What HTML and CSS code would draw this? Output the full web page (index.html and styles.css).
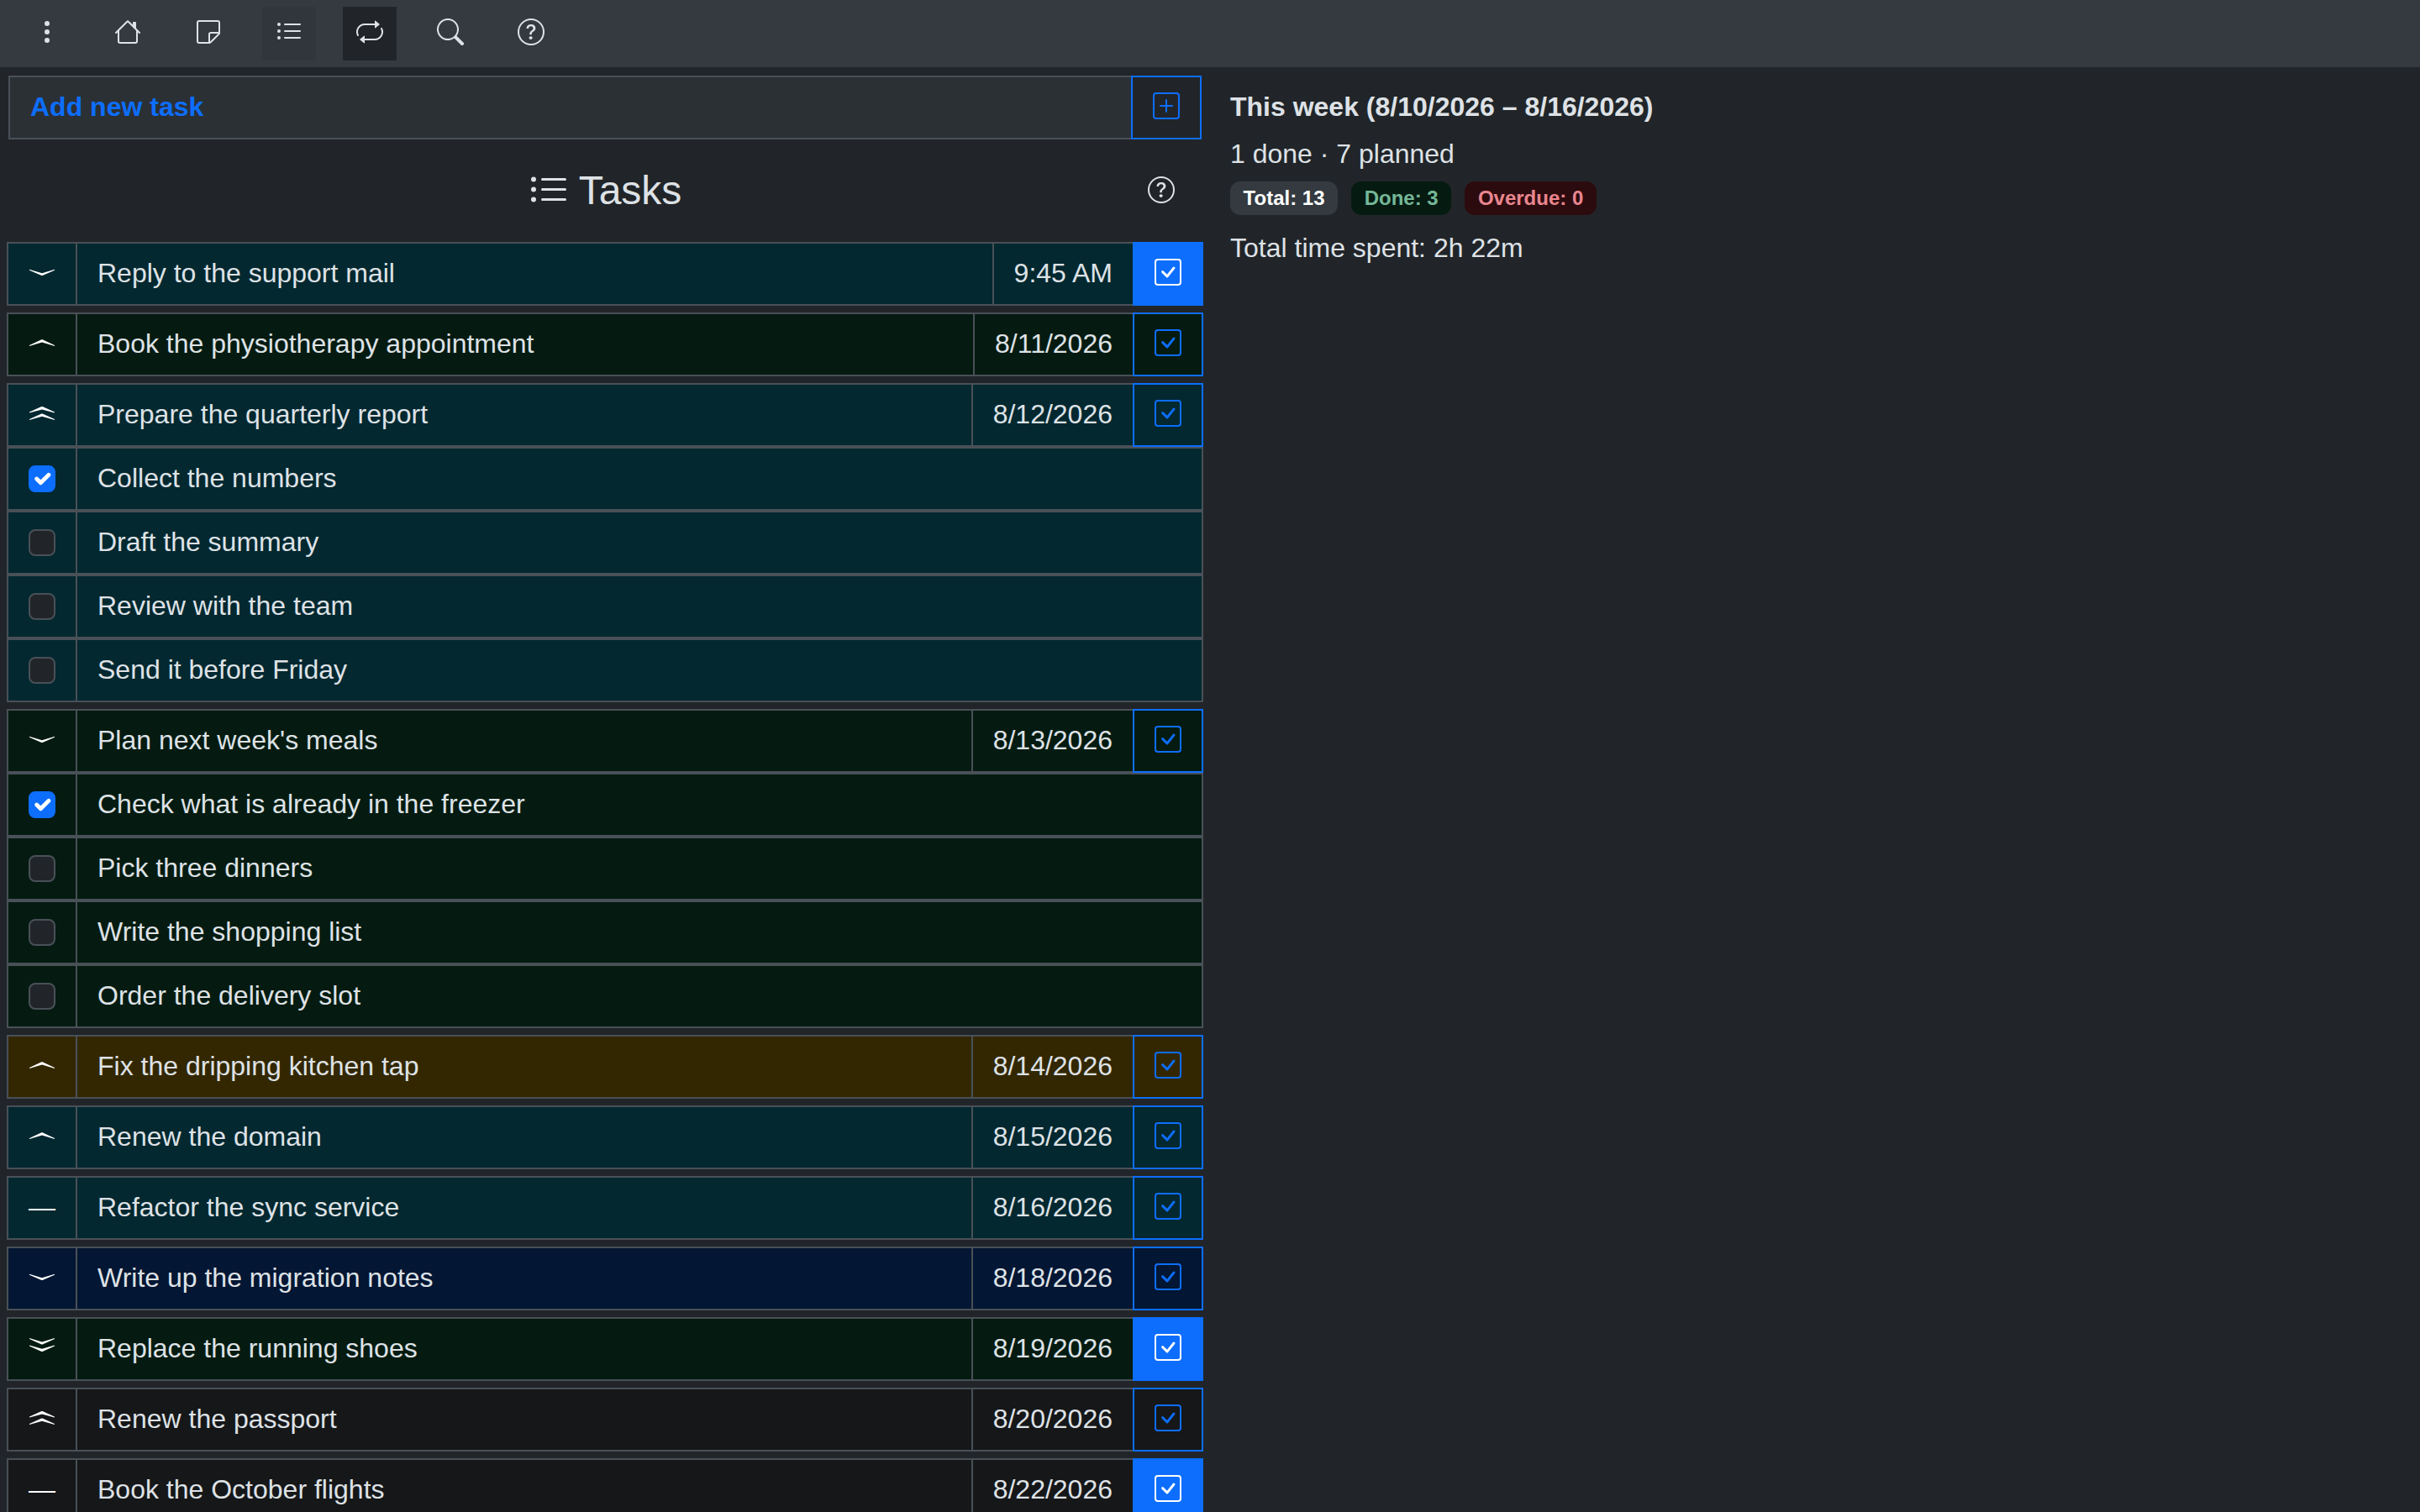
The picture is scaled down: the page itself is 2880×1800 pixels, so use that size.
FILE: index.html
```html
<!DOCTYPE html>
<html lang="en">
<head>
    <meta charset="UTF-8">
    <meta name="viewport" content="width=device-width, initial-scale=1.0">
    <title>Tasks</title>
    <link rel="stylesheet" href="styles.css">
</head>
<body>
    <svg class="sprite" xmlns="http://www.w3.org/2000/svg">
        <symbol id="i-dots" viewBox="0 0 16 16"><path d="M9.5 13a1.5 1.5 0 1 1-3 0 1.5 1.5 0 0 1 3 0zm0-5a1.5 1.5 0 1 1-3 0 1.5 1.5 0 0 1 3 0zm0-5a1.5 1.5 0 1 1-3 0 1.5 1.5 0 0 1 3 0z"/></symbol>
        <symbol id="i-house" viewBox="0 0 16 16"><path d="M8.707 1.5a1 1 0 0 0-1.414 0L.646 8.146a.5.5 0 0 0 .708.708L2 8.207V13.5A1.5 1.5 0 0 0 3.5 15h9a1.5 1.5 0 0 0 1.5-1.5V8.207l.646.647a.5.5 0 0 0 .708-.708L13 5.793V2.5a.5.5 0 0 0-.5-.5h-1a.5.5 0 0 0-.5.5v1.293L8.707 1.5ZM13 7.207V13.5a.5.5 0 0 1-.5.5h-9a.5.5 0 0 1-.5-.5V7.207l5-5 5 5Z"/></symbol>
        <symbol id="i-sticky" viewBox="0 0 16 16"><path d="M2.5 1A1.5 1.5 0 0 0 1 2.5v11A1.5 1.5 0 0 0 2.5 15h6.086a1.5 1.5 0 0 0 1.06-.44l4.915-4.914A1.5 1.5 0 0 0 15 8.586V2.5A1.5 1.5 0 0 0 13.5 1h-11zM2 2.5a.5.5 0 0 1 .5-.5h11a.5.5 0 0 1 .5.5V8H9.5A1.5 1.5 0 0 0 8 9.5V14H2.5a.5.5 0 0 1-.5-.5v-11zm7 11.293V9.5a.5.5 0 0 1 .5-.5h4.293L9 13.793z"/></symbol>
        <symbol id="i-list" viewBox="0 0 16 16"><path d="M5 11.5a.5.5 0 0 1 .5-.5h9a.5.5 0 0 1 0 1h-9a.5.5 0 0 1-.5-.5zm0-4a.5.5 0 0 1 .5-.5h9a.5.5 0 0 1 0 1h-9a.5.5 0 0 1-.5-.5zm0-4a.5.5 0 0 1 .5-.5h9a.5.5 0 0 1 0 1h-9a.5.5 0 0 1-.5-.5zm-3 1a1 1 0 1 0 0-2 1 1 0 0 0 0 2zm0 4a1 1 0 1 0 0-2 1 1 0 0 0 0 2zm0 4a1 1 0 1 0 0-2 1 1 0 0 0 0 2z"/></symbol>
        <symbol id="i-repeat" viewBox="0 0 16 16"><path d="M11 5.466V4H5a4 4 0 0 0-3.584 5.777.5.5 0 1 1-.896.446A5 5 0 0 1 5 3h6V1.534a.25.25 0 0 1 .41-.192l2.36 1.966c.12.1.12.284 0 .384l-2.36 1.966a.25.25 0 0 1-.41-.192Zm3.81.086a.5.5 0 0 1 .67.225A5 5 0 0 1 11 13H5v1.466a.25.25 0 0 1-.41.192l-2.36-1.966a.25.25 0 0 1 0-.384l2.36-1.966a.25.25 0 0 1 .41.192V12h6a4 4 0 0 0 3.585-5.777.5.5 0 0 1 .225-.67Z"/></symbol>
        <symbol id="i-search" viewBox="0 0 16 16"><path d="M11.742 10.344a6.5 6.5 0 1 0-1.397 1.398h-.001c.03.04.062.078.098.115l3.85 3.85a1 1 0 0 0 1.415-1.414l-3.85-3.85a1.007 1.007 0 0 0-.115-.1zM12 6.5a5.5 5.5 0 1 1-11 0 5.5 5.5 0 0 1 11 0z"/></symbol>
        <symbol id="i-help" viewBox="0 0 16 16"><path d="M8 15A7 7 0 1 1 8 1a7 7 0 0 1 0 14zm0 1A8 8 0 1 0 8 0a8 8 0 0 0 0 16z"/><path d="M5.255 5.786a.237.237 0 0 0 .241.247h.825c.138 0 .248-.113.266-.25.09-.656.54-1.134 1.342-1.134.686 0 1.314.343 1.314 1.168 0 .635-.374.927-.965 1.371-.673.489-1.206 1.06-1.168 1.987l.003.217a.25.25 0 0 0 .25.246h.811a.25.25 0 0 0 .25-.25v-.105c0-.718.273-.927 1.01-1.486.609-.463 1.244-.977 1.244-2.056 0-1.511-1.276-2.241-2.673-2.241-1.267 0-2.655.59-2.75 2.286zm1.557 5.763c0 .533.425.927 1.01.927.609 0 1.028-.394 1.028-.927 0-.552-.42-.94-1.029-.94-.584 0-1.009.388-1.009.94z"/></symbol>
        <symbol id="i-check" viewBox="0 0 16 16"><path d="M14 1a1 1 0 0 1 1 1v12a1 1 0 0 1-1 1H2a1 1 0 0 1-1-1V2a1 1 0 0 1 1-1h12zM2 0a2 2 0 0 0-2 2v12a2 2 0 0 0 2 2h12a2 2 0 0 0 2-2V2a2 2 0 0 0-2-2H2z"/><path d="M10.97 4.97a.75.75 0 0 1 1.071 1.05l-3.992 4.99a.75.75 0 0 1-1.08.02L4.324 8.384a.75.75 0 1 1 1.06-1.06l2.094 2.093 3.473-4.425a.235.235 0 0 1 .02-.022z"/></symbol>
        <symbol id="i-plus" viewBox="0 0 16 16"><path d="M14 1a1 1 0 0 1 1 1v12a1 1 0 0 1-1 1H2a1 1 0 0 1-1-1V2a1 1 0 0 1 1-1h12zM2 0a2 2 0 0 0-2 2v12a2 2 0 0 0 2 2h12a2 2 0 0 0 2-2V2a2 2 0 0 0-2-2H2z"/><path d="M8 4a.5.5 0 0 1 .5.5v3h3a.5.5 0 0 1 0 1h-3v3a.5.5 0 0 1-1 0v-3h-3a.5.5 0 0 1 0-1h3v-3A.5.5 0 0 1 8 4z"/></symbol>
        <symbol id="i-tick" viewBox="0 0 20 20"><path fill="none" stroke="#fff" stroke-linecap="round" stroke-linejoin="round" stroke-width="3" d="m6 10 3 3 6-6"/></symbol>
        <symbol id="i-down" viewBox="0 0 32 32"><path d="M1 12.8 16 17.2 31 12.8V13.8L16.6 20H15.4L1 13.8Z"/></symbol>
        <symbol id="i-up" viewBox="0 0 32 32"><path d="M1 20 16 15.6 31 20V19L16.6 12.2H15.4L1 19Z"/></symbol>
        <symbol id="i-down2" viewBox="0 0 32 32"><path d="M1 5 16 9.4 31 5V6L16.6 12.6H15.4L1 6Z"/><path d="M1 13.4 16 17.8 31 13.4V14.4L16.6 21H15.4L1 14.4Z"/></symbol>
        <symbol id="i-up2" viewBox="0 0 32 32"><path d="M1 15.6 16 11.4 31 15.6V14.6L16.6 8H15.4L1 14.6Z"/><path d="M1 24 16 19.8 31 24V23L16.6 16.4H15.4L1 23Z"/></symbol>
    </svg>

    <nav class="topbar">
        <button class="nav-btn"><svg class="icon"><use href="#i-dots"/></svg></button>
        <button class="nav-btn"><svg class="icon"><use href="#i-house"/></svg></button>
        <button class="nav-btn"><svg class="icon"><use href="#i-sticky"/></svg></button>
        <button class="nav-btn hover"><svg class="icon"><use href="#i-list"/></svg></button>
        <button class="nav-btn active"><svg class="icon"><use href="#i-repeat"/></svg></button>
        <button class="nav-btn"><svg class="icon"><use href="#i-search"/></svg></button>
        <button class="nav-btn"><svg class="icon"><use href="#i-help"/></svg></button>
    </nav>

    <main class="content">
        <section class="tasks">
            <div class="add-bar">
                <div class="add-input">Add new task</div>
                <button class="add-btn"><svg class="icon"><use href="#i-plus"/></svg></button>
            </div>

            <div class="title-row">
                <h4 class="title"><svg class="title-icon"><use href="#i-list"/></svg> Tasks</h4>
                <svg class="icon help"><use href="#i-help"/></svg>
            </div>

            <div class="task-list">
                <div class="task-group row-info">
                    <div class="task-row">
                        <div class="cell prio"><svg class="icon"><use href="#i-down"/></svg></div>
                        <div class="cell name">Reply to the support mail</div>
                        <div class="cell date">9:45 AM</div>
                        <button class="done solid"><svg class="icon"><use href="#i-check"/></svg></button>
                    </div>
                </div>
                <div class="task-group row-success">
                    <div class="task-row">
                        <div class="cell prio"><svg class="icon"><use href="#i-up"/></svg></div>
                        <div class="cell name">Book the physiotherapy appointment</div>
                        <div class="cell date">8/11/2026</div>
                        <button class="done"><svg class="icon"><use href="#i-check"/></svg></button>
                    </div>
                </div>
                <div class="task-group row-info">
                    <div class="task-row">
                        <div class="cell prio"><svg class="icon"><use href="#i-up2"/></svg></div>
                        <div class="cell name">Prepare the quarterly report</div>
                        <div class="cell date">8/12/2026</div>
                        <button class="done"><svg class="icon"><use href="#i-check"/></svg></button>
                    </div>
                    <div class="task-row sub">
                        <div class="cell prio"><span class="box on"><svg><use href="#i-tick"/></svg></span></div>
                        <div class="cell name">Collect the numbers</div>
                    </div>
                    <div class="task-row sub">
                        <div class="cell prio"><span class="box"></span></div>
                        <div class="cell name">Draft the summary</div>
                    </div>
                    <div class="task-row sub">
                        <div class="cell prio"><span class="box"></span></div>
                        <div class="cell name">Review with the team</div>
                    </div>
                    <div class="task-row sub">
                        <div class="cell prio"><span class="box"></span></div>
                        <div class="cell name">Send it before Friday</div>
                    </div>
                </div>
                <div class="task-group row-success">
                    <div class="task-row">
                        <div class="cell prio"><svg class="icon"><use href="#i-down"/></svg></div>
                        <div class="cell name">Plan next week's meals</div>
                        <div class="cell date">8/13/2026</div>
                        <button class="done"><svg class="icon"><use href="#i-check"/></svg></button>
                    </div>
                    <div class="task-row sub">
                        <div class="cell prio"><span class="box on"><svg><use href="#i-tick"/></svg></span></div>
                        <div class="cell name">Check what is already in the freezer</div>
                    </div>
                    <div class="task-row sub">
                        <div class="cell prio"><span class="box"></span></div>
                        <div class="cell name">Pick three dinners</div>
                    </div>
                    <div class="task-row sub">
                        <div class="cell prio"><span class="box"></span></div>
                        <div class="cell name">Write the shopping list</div>
                    </div>
                    <div class="task-row sub">
                        <div class="cell prio"><span class="box"></span></div>
                        <div class="cell name">Order the delivery slot</div>
                    </div>
                </div>
                <div class="task-group row-warning">
                    <div class="task-row">
                        <div class="cell prio"><svg class="icon"><use href="#i-up"/></svg></div>
                        <div class="cell name">Fix the dripping kitchen tap</div>
                        <div class="cell date">8/14/2026</div>
                        <button class="done"><svg class="icon"><use href="#i-check"/></svg></button>
                    </div>
                </div>
                <div class="task-group row-info">
                    <div class="task-row">
                        <div class="cell prio"><svg class="icon"><use href="#i-up"/></svg></div>
                        <div class="cell name">Renew the domain</div>
                        <div class="cell date">8/15/2026</div>
                        <button class="done"><svg class="icon"><use href="#i-check"/></svg></button>
                    </div>
                </div>
                <div class="task-group row-info">
                    <div class="task-row">
                        <div class="cell prio dash">—</div>
                        <div class="cell name">Refactor the sync service</div>
                        <div class="cell date">8/16/2026</div>
                        <button class="done"><svg class="icon"><use href="#i-check"/></svg></button>
                    </div>
                </div>
                <div class="task-group row-primary">
                    <div class="task-row">
                        <div class="cell prio"><svg class="icon"><use href="#i-down"/></svg></div>
                        <div class="cell name">Write up the migration notes</div>
                        <div class="cell date">8/18/2026</div>
                        <button class="done"><svg class="icon"><use href="#i-check"/></svg></button>
                    </div>
                </div>
                <div class="task-group row-success">
                    <div class="task-row">
                        <div class="cell prio"><svg class="icon"><use href="#i-down2"/></svg></div>
                        <div class="cell name">Replace the running shoes</div>
                        <div class="cell date">8/19/2026</div>
                        <button class="done solid"><svg class="icon"><use href="#i-check"/></svg></button>
                    </div>
                </div>
                <div class="task-group row-plain">
                    <div class="task-row">
                        <div class="cell prio"><svg class="icon"><use href="#i-up2"/></svg></div>
                        <div class="cell name">Renew the passport</div>
                        <div class="cell date">8/20/2026</div>
                        <button class="done"><svg class="icon"><use href="#i-check"/></svg></button>
                    </div>
                </div>
                <div class="task-group row-plain">
                    <div class="task-row">
                        <div class="cell prio dash">—</div>
                        <div class="cell name">Book the October flights</div>
                        <div class="cell date">8/22/2026</div>
                        <button class="done solid"><svg class="icon"><use href="#i-check"/></svg></button>
                    </div>
                </div>
            </div>
        </section>

        <aside class="week">
            <p class="week-title">This week (8/10/2026 – 8/16/2026)</p>
            <p class="week-line">1 done · 7 planned</p>
            <div class="badges">
                <span class="badge badge-total">Total: 13</span>
                <span class="badge badge-done">Done: 3</span>
                <span class="badge badge-overdue">Overdue: 0</span>
            </div>
            <p class="week-time">Total time spent: 2h 22m</p>
        </aside>
    </main>
</body>
</html>
```

FILE: styles.css
```css
body {
    font-family: "Liberation Sans", Arial, sans-serif;
    font-size: 32px;
    line-height: 48px;
    color: #dee2e6;
    background-color: #212529;
    margin: 0;
    height: 100vh;
    overflow: hidden;
}
p {
    margin: 0;
}
button {
    font: inherit;
    color: inherit;
    background: none;
    border: none;
    padding: 0;
    cursor: pointer;
}
.sprite {
    display: none;
}
.icon {
    display: block;
    width: 32px;
    height: 32px;
    fill: currentColor;
    margin-bottom: 4px;
}

/* top bar */
.topbar {
    display: flex;
    align-items: center;
    gap: 32px;
    height: 80px;
    padding-left: 24px;
    background-color: #343a40;
}
.nav-btn {
    display: flex;
    align-items: center;
    justify-content: center;
    width: 64px;
    height: 64px;
}
.nav-btn.hover {
    background-color: #30363c;
}
.nav-btn.active {
    background-color: #212529;
}

.content {
    display: grid;
    grid-template-columns: 1440px 1fr;
}
.tasks {
    padding: 0 8px;
}

/* add task */
.add-bar {
    display: flex;
    height: 76px;
    margin: 10px 2px 0;
}
.add-input {
    flex: 1;
    display: flex;
    align-items: center;
    padding: 0 24px 2px;
    font-weight: bold;
    color: #0d6efd;
    background-color: #2b3035;
    border: 2px solid #495057;
    border-right: none;
}
.add-btn {
    display: flex;
    align-items: center;
    justify-content: center;
    width: 84px;
    color: #0d6efd;
    border: 2px solid #0d6efd;
}

.title-row {
    display: grid;
    grid-template-columns: 1fr auto 1fr;
    align-items: center;
    height: 122px;
}
.title {
    grid-column: 2;
    display: flex;
    align-items: center;
    gap: 12px;
    margin: 0;
    font-size: 48px;
    line-height: 58px;
    font-weight: 500;
}
.title-icon {
    width: 48px;
    height: 48px;
    fill: currentColor;
}
.help {
    justify-self: end;
    margin-right: 34px;
    margin-bottom: 2px;
}

/* task rows */
.task-list {
    display: flex;
    flex-direction: column;
    gap: 8px;
}
.row-info {
    background-color: #032830;
}
.row-success {
    background-color: #051b11;
}
.row-warning {
    background-color: #332701;
}
.row-primary {
    background-color: #031633;
}
.row-plain {
    background-color: #161719;
}
.task-row {
    display: flex;
    height: 76px;
    flex-shrink: 0;
}
.cell {
    display: flex;
    align-items: center;
    border: 2px solid #495057;
    border-left: none;
}
.prio {
    justify-content: center;
    width: 84px;
    box-sizing: border-box;
    border-left: 2px solid #495057;
    color: #fff;
}
.dash {
    padding-bottom: 2px;
}
.name {
    flex: 1;
    padding: 0 24px 2px;
    border-right: none;
}
.sub .name {
    border-right: 2px solid #495057;
}
.date {
    padding: 0 24px 2px;
    border-left: 2px solid #495057;
    border-right: none;
}
.done {
    display: flex;
    align-items: center;
    justify-content: center;
    width: 84px;
    box-sizing: border-box;
    color: #0d6efd;
    border: 2px solid #0d6efd;
}
.done.solid {
    color: #fff;
    background-color: #0d6efd;
}

/* subtask checkbox */
.box {
    display: block;
    box-sizing: border-box;
    width: 32px;
    height: 32px;
    background-color: #212529;
    border: 2px solid #495057;
    border-radius: 8px;
}
.box svg {
    display: block;
    width: 32px;
    height: 32px;
    margin: -2px;
}
.box.on {
    background-color: #0d6efd;
    border-color: #0d6efd;
}

/* week summary */
.week {
    padding: 23px 0 0 24px;
}
.week-title {
    font-weight: bold;
}
.week-line {
    margin-top: 8px;
}
.badges {
    display: flex;
    gap: 16px;
    margin-top: 9px;
}
.badge {
    display: block;
    padding: 8px 15.6px;
    font-size: 24px;
    line-height: 24px;
    font-weight: bold;
    border-radius: 12px;
}
.badge-total {
    color: #fff;
    background-color: #343a40;
}
.badge-done {
    color: #75b798;
    background-color: #051b11;
}
.badge-overdue {
    color: #ea868f;
    background-color: #2c0b0e;
}
.week-time {
    margin-top: 15px;
}
```
